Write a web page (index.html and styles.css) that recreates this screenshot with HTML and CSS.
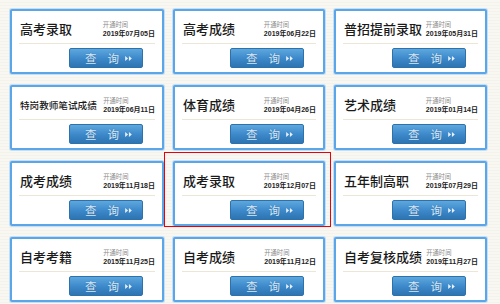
FILE: index.html
```html
<!DOCTYPE html>
<html lang="zh-CN">
<head>
<meta charset="utf-8">
<title>查询</title>
<link rel="stylesheet" href="styles.css">
</head>
<body>
<div class="grid">
  <div class="card"><div class="head"><span class="title">高考录取</span><div class="meta"><span class="label">开通时间</span><span class="date">2019年07月05日</span></div></div><div class="line"></div><a class="btn">查<i></i>询<svg class="arr" viewBox="0 0 8 6"><path d="M0 0L3.5 3L0 6Z M4.5 0L8 3L4.5 6Z"/></svg></a></div>
  <div class="card"><div class="head"><span class="title">高考成绩</span><div class="meta"><span class="label">开通时间</span><span class="date">2019年06月22日</span></div></div><div class="line"></div><a class="btn">查<i></i>询<svg class="arr" viewBox="0 0 8 6"><path d="M0 0L3.5 3L0 6Z M4.5 0L8 3L4.5 6Z"/></svg></a></div>
  <div class="card"><div class="head"><span class="title">普招提前录取</span><div class="meta"><span class="label">开通时间</span><span class="date">2019年05月31日</span></div></div><div class="line"></div><a class="btn">查<i></i>询<svg class="arr" viewBox="0 0 8 6"><path d="M0 0L3.5 3L0 6Z M4.5 0L8 3L4.5 6Z"/></svg></a></div>

  <div class="card"><div class="head"><span class="title small">特岗教师笔试成绩</span><div class="meta"><span class="label">开通时间</span><span class="date">2019年06月11日</span></div></div><div class="line"></div><a class="btn">查<i></i>询<svg class="arr" viewBox="0 0 8 6"><path d="M0 0L3.5 3L0 6Z M4.5 0L8 3L4.5 6Z"/></svg></a></div>
  <div class="card"><div class="head"><span class="title">体育成绩</span><div class="meta"><span class="label">开通时间</span><span class="date">2019年04月26日</span></div></div><div class="line"></div><a class="btn">查<i></i>询<svg class="arr" viewBox="0 0 8 6"><path d="M0 0L3.5 3L0 6Z M4.5 0L8 3L4.5 6Z"/></svg></a></div>
  <div class="card"><div class="head"><span class="title">艺术成绩</span><div class="meta"><span class="label">开通时间</span><span class="date">2019年01月14日</span></div></div><div class="line"></div><a class="btn">查<i></i>询<svg class="arr" viewBox="0 0 8 6"><path d="M0 0L3.5 3L0 6Z M4.5 0L8 3L4.5 6Z"/></svg></a></div>

  <div class="card"><div class="head"><span class="title">成考成绩</span><div class="meta"><span class="label">开通时间</span><span class="date">2019年11月18日</span></div></div><div class="line"></div><a class="btn">查<i></i>询<svg class="arr" viewBox="0 0 8 6"><path d="M0 0L3.5 3L0 6Z M4.5 0L8 3L4.5 6Z"/></svg></a></div>
  <div class="card selected"><div class="head"><span class="title">成考录取</span><div class="meta"><span class="label">开通时间</span><span class="date">2019年12月07日</span></div></div><div class="line"></div><a class="btn">查<i></i>询<svg class="arr" viewBox="0 0 8 6"><path d="M0 0L3.5 3L0 6Z M4.5 0L8 3L4.5 6Z"/></svg></a></div>
  <div class="card"><div class="head"><span class="title">五年制高职</span><div class="meta"><span class="label">开通时间</span><span class="date">2019年07月29日</span></div></div><div class="line"></div><a class="btn">查<i></i>询<svg class="arr" viewBox="0 0 8 6"><path d="M0 0L3.5 3L0 6Z M4.5 0L8 3L4.5 6Z"/></svg></a></div>

  <div class="card"><div class="head"><span class="title">自考考籍</span><div class="meta"><span class="label">开通时间</span><span class="date">2015年11月25日</span></div></div><div class="line"></div><a class="btn">查<i></i>询<svg class="arr" viewBox="0 0 8 6"><path d="M0 0L3.5 3L0 6Z M4.5 0L8 3L4.5 6Z"/></svg></a></div>
  <div class="card"><div class="head"><span class="title">自考成绩</span><div class="meta"><span class="label">开通时间</span><span class="date">2019年11月12日</span></div></div><div class="line"></div><a class="btn">查<i></i>询<svg class="arr" viewBox="0 0 8 6"><path d="M0 0L3.5 3L0 6Z M4.5 0L8 3L4.5 6Z"/></svg></a></div>
  <div class="card"><div class="head"><span class="title">自考复核成绩</span><div class="meta"><span class="label">开通时间</span><span class="date">2019年11月27日</span></div></div><div class="line"></div><a class="btn">查<i></i>询<svg class="arr" viewBox="0 0 8 6"><path d="M0 0L3.5 3L0 6Z M4.5 0L8 3L4.5 6Z"/></svg></a></div>
</div>
</body>
</html>
```

FILE: styles.css
```css
html, body {
  margin: 0;
  padding: 0;
}
body {
  width: 500px;
  height: 304px;
  overflow: hidden;
  background-color: #f7f6f0;
  background-image: repeating-linear-gradient(180deg, #f8f7f2 0, #f8f7f2 2px, #f3f2eb 2px, #f3f2eb 3px);
  font-family: "Noto Sans CJK SC", "Noto Sans", sans-serif;
}
.grid {
  display: grid;
  grid-template-columns: 154px 152px 153px;
  grid-template-rows: 65px 65px 65px 65px;
  column-gap: 9px;
  row-gap: 11px;
  padding: 9px 0 0 10px;
}
.card {
  position: relative;
  box-sizing: border-box;
  background: #fff;
  border: 2px solid #5aa6e8;
  box-shadow: 0 0 0 1px #c4dff5;
  border-radius: 2px;
  display: flex;
  flex-direction: column;
}
.selected {
  z-index: 2;
}
.selected::after {
  content: "";
  position: absolute;
  left: -11px;
  top: -11px;
  right: -8px;
  bottom: -3px;
  border: 1px solid #e8000c;
  pointer-events: none;
}
.head {
  height: 28px;
  padding: 4px 7px 0 8px;
  display: flex;
  align-items: center;
  justify-content: space-between;
}
.title {
  font-size: 13px;
  line-height: 14px;
  font-weight: 500;
  color: #1a1a1a;
  white-space: nowrap;
}
.title.small {
  font-size: 9.6px;
}
.meta {
  display: flex;
  flex-direction: column;
  align-items: flex-start;
}
.label {
  font-size: 6.3px;
  line-height: 9px;
  color: #8a8a8a;
}
.date {
  font-family: "Liberation Sans", "Noto Sans CJK SC", sans-serif;
  font-size: 7px;
  line-height: 9px;
  font-weight: bold;
  color: #222;
  white-space: nowrap;
}
.line {
  height: 1px;
  margin: 0 7px;
  background: #ebe6d6;
}
.btn {
  align-self: flex-end;
  margin: 4px 19px 0 0;
  width: 74px;
  height: 20px;
  box-sizing: border-box;
  border: 1px solid #2e72ab;
  border-radius: 2px;
  background: linear-gradient(180deg, #5ea7de 0%, #3e8acb 50%, #2d74b2 100%);
  color: #dbe8f5;
  font-size: 11.5px;
  line-height: 18px;
  display: flex;
  align-items: center;
  padding-left: 15px;
  text-shadow: 0 0 1px #2a6aa3;
}
.btn i {
  display: inline-block;
  width: 11px;
}
.arr {
  width: 7px;
  height: 5px;
  margin-left: 6px;
  fill: #e8f0f8;
}
```
